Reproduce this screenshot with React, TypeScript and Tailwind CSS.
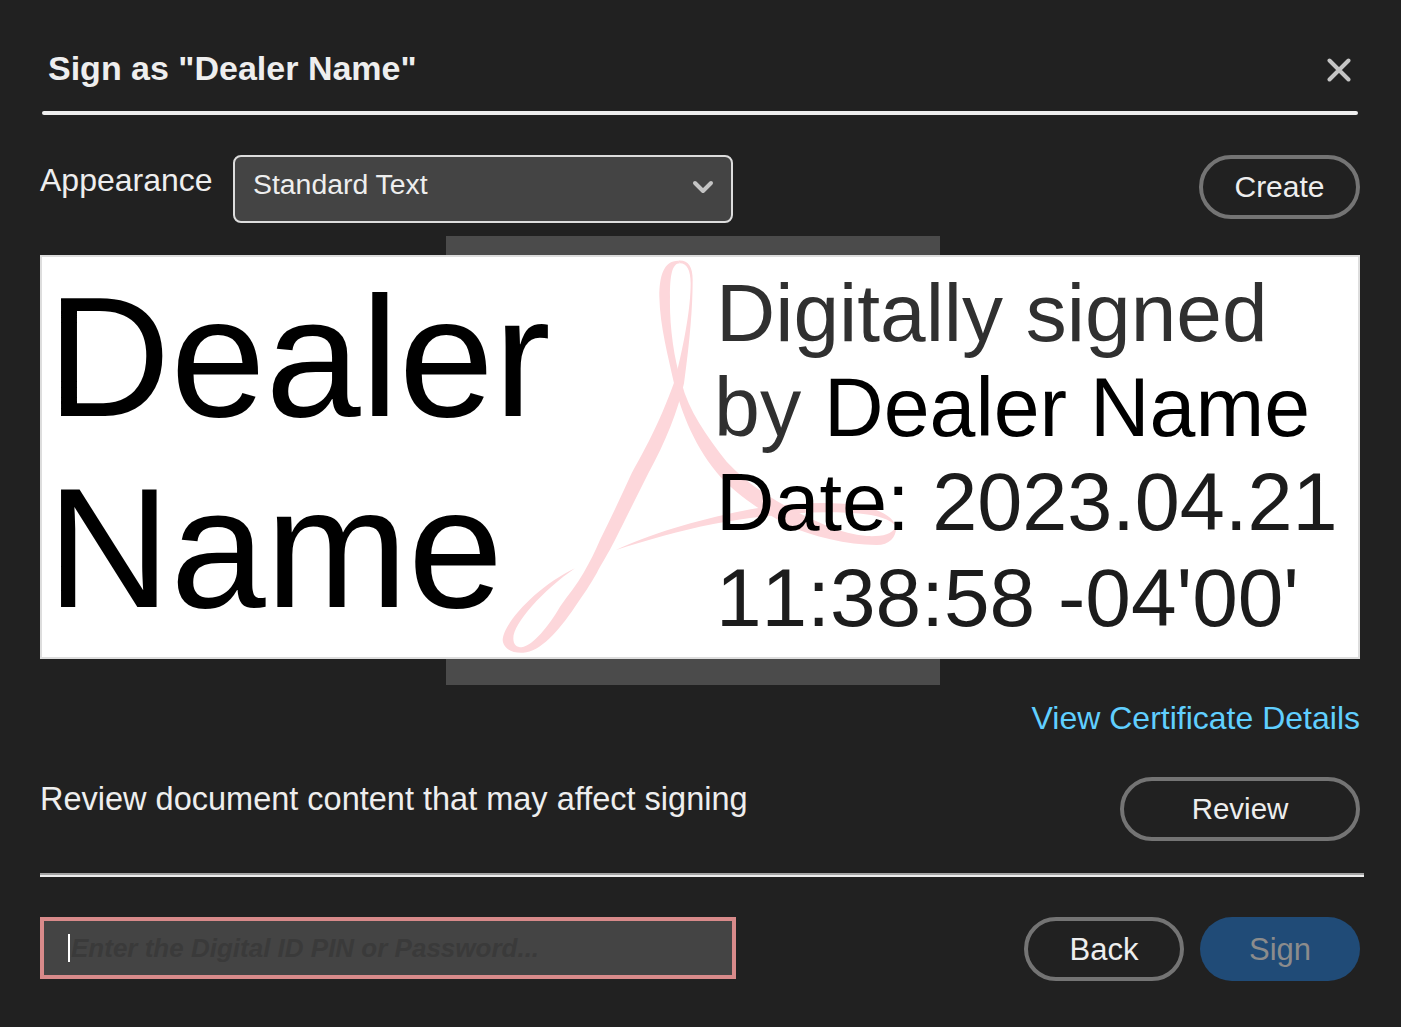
import React from 'react';

const sans = "font-['Liberation_Sans',Arial,sans-serif]";

const PillButton: React.FC<{ label: string; width: string; textSize: string }> = ({ label, width, textSize }) => (
  <button className={`${width} ${textSize} h-16 rounded-full border-4 border-[#747474] text-[#eeeeee] leading-none flex items-center justify-center`}>
    {label}
  </button>
);

// pink ribbon mark behind the signature text
const AcrobatMark = () => (
  <svg viewBox="0 0 1380 1350" className="absolute left-[438px] top-[-17px] w-[460px] h-[450px]" fill="#fdd7db">
    <path d="M595 62 C550 62 538 110 538 170 C540 260 565 350 582 430 C605 520 645 625 725 715 C790 780 850 815 920 855 C1000 890 1100 915 1190 915 C1230 915 1250 890 1248 860 C1235 885 1200 890 1160 888 C1080 880 1020 850 950 815 C870 775 800 730 740 665 C680 590 625 510 605 430 C580 350 568 250 570 170 C570 110 575 70 600 70 Z" />
    <path d="M595 62 C625 60 638 80 638 120 C638 200 630 300 612 430 C595 510 555 610 505 700 C470 770 440 830 405 900 C385 940 365 970 350 1000 C330 1035 310 1065 285 1100 C235 1175 180 1235 130 1238 C95 1240 70 1225 68 1200 C70 1150 170 1040 285 985 C190 1050 100 1150 100 1195 C100 1215 110 1222 125 1222 C160 1215 205 1160 240 1100 C265 1065 290 1035 310 1000 C330 965 345 935 360 900 C395 830 425 765 455 700 C490 635 535 560 585 420 C615 300 632 200 632 130 C632 90 620 70 600 70 Z" />
    <path d="M408 930 C500 885 650 840 790 812 C900 790 1050 780 1150 798 C1200 810 1240 830 1248 860 C1230 832 1170 820 1100 818 C950 810 800 835 700 852 C600 872 500 900 408 930 Z" />
  </svg>
);

export default function App() {
  return (
    <div className={`w-[1401px] h-[1027px] bg-[#212121] pl-10 pr-[41px] overflow-hidden ${sans}`}>
      <div className="pt-[44px] h-[111px] pl-2 pr-[9px] flex items-start justify-between">
        <h1 className="text-[34px] leading-[48px] font-bold text-[#eeeeee]">Sign as "Dealer Name"</h1>
        <svg viewBox="0 0 24 24" className="w-[24px] h-[24px] mt-[14px]" stroke="#c4c4c4" strokeWidth="4" strokeLinecap="round">
          <path d="M2.5 2.5 L21.5 21.5 M21.5 2.5 L2.5 21.5" />
        </svg>
      </div>
      <div className="h-1 ml-[2px] mr-[2px] rounded-full bg-[#eeeeee]"></div>

      <div className="mt-10 h-[68px] flex items-start">
        <label className="text-[32px] leading-[50px] text-[#eeeeee] w-[193px]">Appearance</label>
        <div className="w-[500px] h-[68px] rounded-lg border-2 border-[#dddddd] bg-[#444444] pl-[18px] pr-[17px] pb-[10px] flex items-center justify-between">
          <span className="text-[28.4px] text-[#eeeeee]">Standard Text</span>
          <svg viewBox="0 0 22 14" className="w-[22px] h-[14px] mt-[6px]" fill="none" stroke="#c4c4c4" strokeWidth="4" strokeLinecap="round" strokeLinejoin="round">
            <path d="M3 3 L11 11 L19 3" />
          </svg>
        </div>
        <div className="ml-auto">
          <PillButton label="Create" width="w-[161px]" textSize="text-[30px]" />
        </div>
      </div>

      <div className="relative mt-8">
        <div className="absolute left-[406px] top-[-19px] w-[494px] h-[449px] bg-[#4b4b4b]"></div>
        <div className="relative h-[404px] bg-white border-2 border-[#dddddd] flex">
          <AcrobatMark />
          <div className="relative w-[675px] pl-[5px] pt-[4px] text-[171px] leading-[191px] text-black">
            <div>Dealer</div>
            <div>Name</div>
          </div>
          <div className="relative -ml-[1px] pt-[8px] text-[82px] leading-[95px] text-[#303030] whitespace-nowrap">
            <div>Digitally signed</div>
            <div className="text-[82.5px] -ml-[2px]">by <span className="text-black">Dealer Name</span></div>
            <div className="text-[81px]"><span className="text-black">Date:</span> <span className="text-[#1c1c1c]">2023.04.21</span></div>
            <div className="text-[#1c1c1c] [font-kerning:none]">11:38:58 -04'00'</div>
          </div>
        </div>
      </div>

      <div className="mt-[39px] h-10 flex justify-end items-center">
        <a className="text-[32px] text-[#60cfff]">View Certificate Details</a>
      </div>

      <div className="mt-[39px] h-16 flex items-start justify-between">
        <span className="text-[32.5px] leading-[44px] text-[#eeeeee]">Review document content that may affect signing</span>
        <PillButton label="Review" width="w-[240px]" textSize="text-[29.5px]" />
      </div>

      <div className="mt-8 h-1 -mr-1 border-t-2 border-[#a4a4a4] bg-[#eeeeee]"></div>

      <div className="mt-10 flex items-start">
        <div className="relative w-[696px] h-[62px]">
          <input
            readOnly
            placeholder="Enter the Digital ID PIN or Password..."
            className="w-full h-full border-4 border-[#d88a8a] bg-[#444444] pl-[27px] pr-3 text-[26px] outline-none placeholder:text-[#3a3a3a] placeholder:font-bold placeholder:italic"
          />
          <div className="absolute left-[28px] top-[17px] w-[2px] h-[28px] bg-white"></div>
        </div>
        <div className="ml-auto flex gap-4">
          <PillButton label="Back" width="w-[160px]" textSize="text-[31px]" />
          <button className="w-[160px] h-16 rounded-full bg-[#204b77] text-[#8c8c8c] text-[31px] leading-none flex items-center justify-center">
            Sign
          </button>
        </div>
      </div>
    </div>
  );
}
